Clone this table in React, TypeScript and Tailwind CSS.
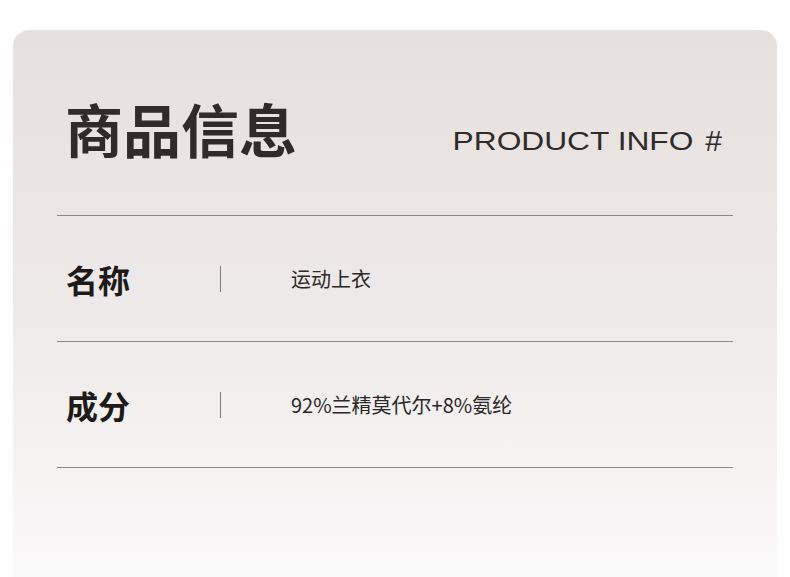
const rows = [
  { label: '名称', value: '运动上衣' },
  { label: '成分', value: '92%兰精莫代尔+8%氨纶' },
];

export default function App() {
  return (
    <div
      className="h-[577px] w-[790px] overflow-hidden bg-white pt-[30px] px-[13px]"
      style={{ fontFamily: '"Noto Sans CJK SC", "Noto Sans", sans-serif' }}
    >
      <div className="h-[560px] rounded-t-[16px] bg-gradient-to-b from-[#e6e0de] via-[#eeeae9] to-[#fbfafa] px-[44px]">
        <div className="flex h-[186px] items-center justify-between border-b border-[#8f8a89] pt-[11px]">
          <h1 className="pl-[8px] text-[58px] font-bold leading-none text-[#2e2b2a]">商品信息</h1>
          <div
            className="mt-[26px] flex items-center pr-[11px] text-[26px] leading-none text-[#2e2b2a]"
            style={{ fontFamily: '"Liberation Sans", Arial, sans-serif' }}
          >
            <span className="inline-block origin-right scale-x-[1.22]">PRODUCT INFO</span>
            <span className="ml-[12px] text-[30px]">#</span>
          </div>
        </div>
        {rows.map((row) => (
          <div key={row.label} className="flex h-[126px] items-center border-b border-[#8f8a89]">
            <div className="w-[163px] pl-[9px] text-[32px] font-bold leading-none text-[#1d1a19]">
              {row.label}
            </div>
            <div className="h-[26px] w-px bg-[#807b7a]" />
            <div className="pl-[70px] text-[20px] leading-none text-[#2a2726]">{row.value}</div>
          </div>
        ))}
      </div>
    </div>
  );
}
